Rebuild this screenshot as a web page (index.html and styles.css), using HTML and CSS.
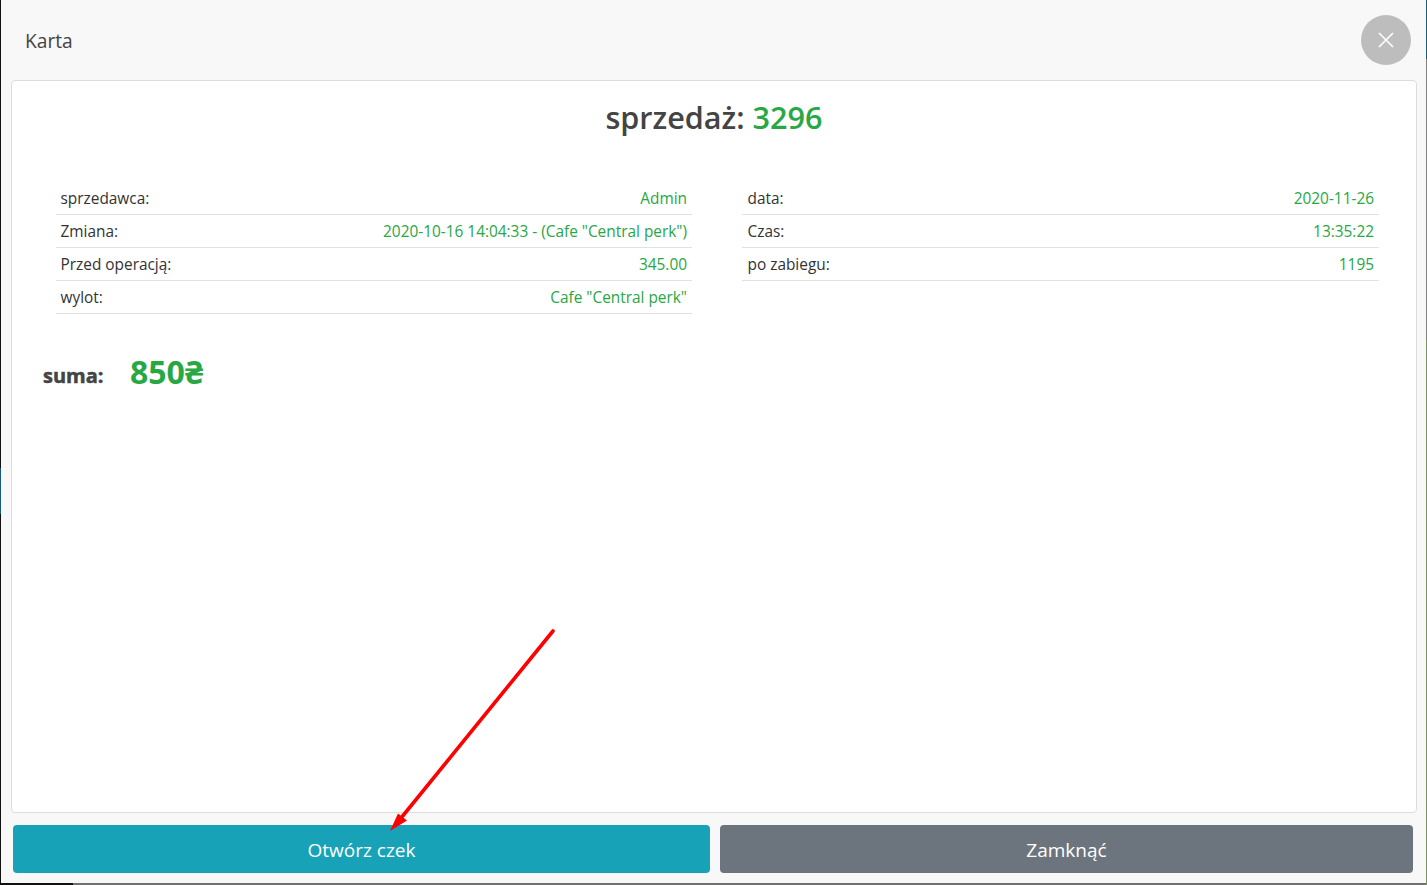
FILE: index.html
```html
<!DOCTYPE html>
<html lang="pl">
<head>
<meta charset="utf-8">
<title>Karta</title>
<link rel="stylesheet" href="styles.css">
</head>
<body>
<div class="modal">
  <header class="modal-header">
    <span class="modal-title">Karta</span>
    <button class="close-btn" aria-label="Zamknij">
      <svg width="16" height="16" viewBox="0 0 16 16"><path d="M1 1L15 15M15 1L1 15" stroke="#fff" stroke-width="1.6" fill="none"/></svg>
    </button>
  </header>
  <main class="card">
    <h1 class="sale-title">sprzedaż: <span class="green">3296</span></h1>
    <div class="tables">
      <div class="info">
        <div class="row"><span class="label">sprzedawca:</span><span class="value">Admin</span></div>
        <div class="row"><span class="label">Zmiana:</span><span class="value">2020-10-16 14:04:33 - (Cafe "Central perk")</span></div>
        <div class="row"><span class="label">Przed operacją:</span><span class="value">345.00</span></div>
        <div class="row"><span class="label">wylot:</span><span class="value">Cafe "Central perk"</span></div>
      </div>
      <div class="info">
        <div class="row"><span class="label">data:</span><span class="value">2020-11-26</span></div>
        <div class="row"><span class="label">Czas:</span><span class="value">13:35:22</span></div>
        <div class="row"><span class="label">po zabiegu:</span><span class="value">1195</span></div>
      </div>
    </div>
    <div class="total">
      <span class="total-label">suma:</span>
      <span class="total-value">850₴</span>
    </div>
  </main>
  <footer class="actions">
    <button class="btn btn-info">Otwórz czek</button>
    <button class="btn btn-secondary">Zamknąć</button>
  </footer>
</div>
<svg class="arrow" width="1427" height="885" viewBox="0 0 1427 885">
  <path d="M553 631L397 823" stroke="#ff0000" stroke-width="3.6" stroke-linecap="round" fill="none"/>
  <path d="M390 831L398 813.500L407 820.500Z" fill="#ff0000"/>
</svg>
</body>
</html>
```
FILE: styles.css
```css
* { box-sizing: border-box; }
html, body { height: 100%; }
body {
  margin: 0;
  height: 885px;
  overflow: hidden;
  padding: 0 1px 2px;
  font-family: "Open Sans", "Noto Sans", sans-serif;
  color: #444;
  background:
    linear-gradient(#17597f, #17597f) left 0 top 468px / 1px 46px no-repeat,
    linear-gradient(#17597f, #17597f) right 0 top 0 / 1px 59px no-repeat,
    linear-gradient(#808080, #808080) right 0 top 59px / 1px 281px no-repeat,
    linear-gradient(#7f8f66, #7f8f66) right 0 top 340px / 1px 545px no-repeat,
    linear-gradient(#111, #111) left 0 bottom 0 / 73px 2px no-repeat,
    linear-gradient(#707070, #707070) left 73px bottom 0 / 100% 2px no-repeat,
    #111;
}
.modal {
  height: 883px;
  background: #f8f8f8;
  display: flex;
  flex-direction: column;
}
.modal-header {
  height: 80px;
  flex: none;
  display: flex;
  align-items: center;
  justify-content: space-between;
  padding: 0 15px 0 24px;
}
.modal-title { font-size: 19.2px; }
.close-btn {
  width: 50px;
  height: 50px;
  border: 0;
  border-radius: 50%;
  background: #bdbdbd;
  display: flex;
  align-items: center;
  justify-content: center;
  padding: 0;
}
.card {
  flex: none;
  height: 733px;
  margin: 0 9px 0 10px;
  background: #fff;
  border: 1px solid #ddd;
  border-radius: 4px;
  padding: 0 31px;
}
.sale-title {
  margin: 15px 0 0;
  height: 42px;
  line-height: 42px;
  text-align: center;
  font-size: 30.6px;
  font-weight: 600;
}
.green { color: #28a745; }
.tables {
  display: flex;
  gap: 50px;
  margin: 44px 6px 0 13px;
}
.info { flex: 1; }
.info:first-child { flex: none; width: 636px; }
.row {
  height: 33px;
  display: flex;
  align-items: center;
  justify-content: space-between;
  padding: 0 5px 0 4.5px;
  border-bottom: 1px solid #dee2e6;
  font-size: 15.4px;
}
.info + .info .row { padding-left: 5.5px; }
.label { color: #333; }
.value { color: #28a745; }
.total {
  display: flex;
  align-items: center;
  margin-top: 36px;
  height: 44px;
}
.total-label {
  font-size: 20px;
  font-weight: 700;
  width: 87px;
  padding-top: 7px;
  -webkit-text-stroke: 0.5px #444;
}
.total-value {
  font-size: 32px;
  font-weight: 700;
  padding-bottom: 2px;
  color: #28a745;
}
.actions {
  flex: 1;
  display: flex;
  gap: 10px;
  padding: 12px 13px 10px 12px;
}
.btn {
  flex: none;
  height: 48px;
  border: 0;
  border-radius: 4px;
  padding: 2px 0 0;
  color: #fff;
  font-family: inherit;
  font-size: 19px;
}
.btn-info { width: 697px; background: #17a2b8; }
.btn-secondary { width: 693px; background: #6c757d; }
.arrow {
  position: absolute;
  left: 0;
  top: 0;
  pointer-events: none;
}
```
